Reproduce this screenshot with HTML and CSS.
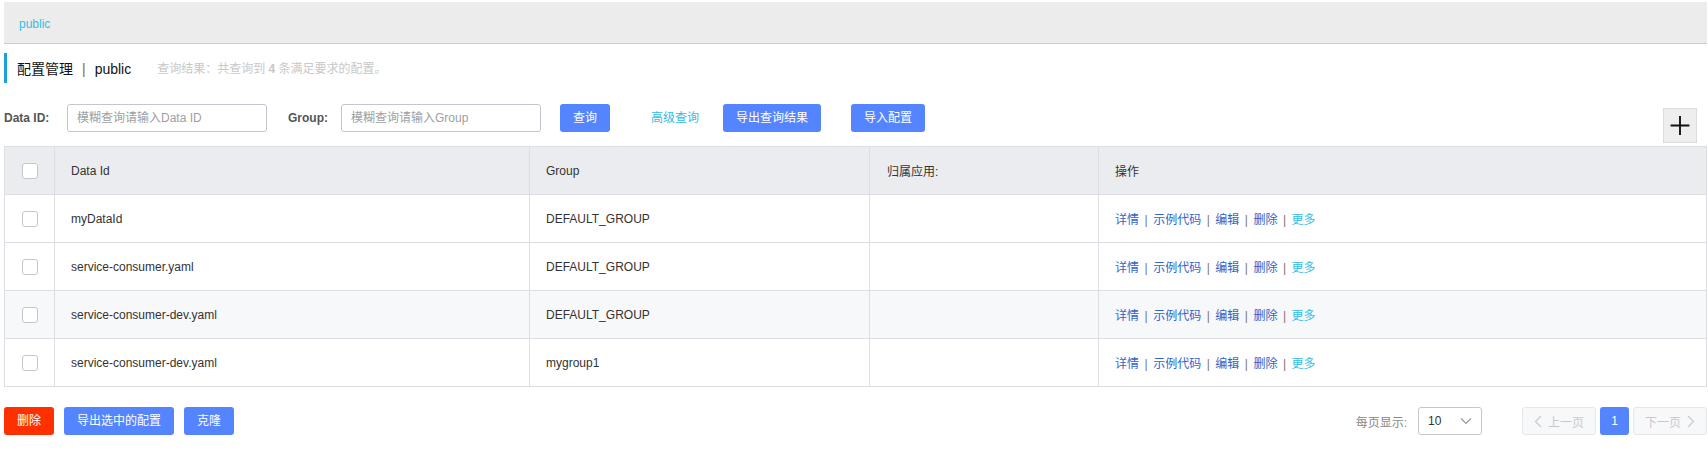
FILE: index.html
```html
<!DOCTYPE html>
<html lang="zh-CN">
<head>
<meta charset="utf-8">
<title>配置管理</title>
<link rel="stylesheet" href="styles.css">
</head>
<body>
<div class="page">
  <div class="ns-bar"><a class="ns-link">public</a></div>

  <div class="title-row">
    <span class="title-main">配置管理</span>
    <span class="title-sep">|</span>
    <span class="title-ns">public</span>
    <span class="title-summary">查询结果：共查询到 <b>4</b> 条满足要求的配置。</span>
  </div>

  <div class="toolbar">
    <label class="field-label label-dataid">Data ID:</label>
    <div class="input"><span class="placeholder">模糊查询请输入Data ID</span></div>
    <label class="field-label label-group">Group:</label>
    <div class="input"><span class="placeholder">模糊查询请输入Group</span></div>
    <button class="btn btn-primary btn-query">查询</button>
    <a class="text-link adv-link">高级查询</a>
    <button class="btn btn-primary btn-export">导出查询结果</button>
    <button class="btn btn-primary btn-import">导入配置</button>
    <button class="plus-btn" aria-label="新建配置">
      <svg width="34" height="35" viewBox="0 0 34 35"><path d="M7 17.5H27M17 7.5V27.5" stroke="#111" stroke-width="2" fill="none"/></svg>
    </button>
  </div>

  <table class="cfg-table">
    <colgroup>
      <col class="c-check"><col class="c-id"><col class="c-group"><col class="c-app"><col>
    </colgroup>
    <thead>
      <tr>
        <th class="check-cell"><span class="checkbox"></span></th>
        <th>Data Id</th>
        <th>Group</th>
        <th class="app-cell">归属应用:</th>
        <th>操作</th>
      </tr>
    </thead>
    <tbody>
      <tr>
        <td class="check-cell"><span class="checkbox"></span></td>
        <td>myDataId</td>
        <td>DEFAULT_GROUP</td>
        <td></td>
        <td class="ops"><a>详情</a><i>|</i><a>示例代码</a><i>|</i><a>编辑</a><i>|</i><a>删除</a><i>|</i><a class="more">更多</a></td>
      </tr>
      <tr>
        <td class="check-cell"><span class="checkbox"></span></td>
        <td>service-consumer.yaml</td>
        <td>DEFAULT_GROUP</td>
        <td></td>
        <td class="ops"><a>详情</a><i>|</i><a>示例代码</a><i>|</i><a>编辑</a><i>|</i><a>删除</a><i>|</i><a class="more">更多</a></td>
      </tr>
      <tr class="hover">
        <td class="check-cell"><span class="checkbox"></span></td>
        <td>service-consumer-dev.yaml</td>
        <td>DEFAULT_GROUP</td>
        <td></td>
        <td class="ops"><a>详情</a><i>|</i><a>示例代码</a><i>|</i><a>编辑</a><i>|</i><a>删除</a><i>|</i><a class="more">更多</a></td>
      </tr>
      <tr>
        <td class="check-cell"><span class="checkbox"></span></td>
        <td>service-consumer-dev.yaml</td>
        <td>mygroup1</td>
        <td></td>
        <td class="ops"><a>详情</a><i>|</i><a>示例代码</a><i>|</i><a>编辑</a><i>|</i><a>删除</a><i>|</i><a class="more">更多</a></td>
      </tr>
    </tbody>
  </table>

  <div class="footer">
    <div class="footer-actions">
      <button class="btn btn-danger">删除</button>
      <button class="btn btn-primary">导出选中的配置</button>
      <button class="btn btn-primary">克隆</button>
    </div>
    <div class="pager">
      <span class="pager-label">每页显示:</span>
      <div class="select">
        <span>10</span>
        <svg width="12" height="8" viewBox="0 0 12 8"><path d="M1 1.5L6 6.5L11 1.5" stroke="#999" stroke-width="1.2" fill="none"/></svg>
      </div>
      <div class="pages">
        <button class="page-btn nav">
          <svg width="8" height="13" viewBox="0 0 8 13"><path d="M7 1L1.5 6.5L7 12" stroke="#ccc" stroke-width="1.3" fill="none"/></svg>
          <span>上一页</span>
        </button>
        <button class="page-btn current">1</button>
        <button class="page-btn nav next">
          <span>下一页</span>
          <svg width="8" height="13" viewBox="0 0 8 13"><path d="M1 1L6.5 6.5L1 12" stroke="#ccc" stroke-width="1.3" fill="none"/></svg>
        </button>
      </div>
    </div>
  </div>
</div>
</body>
</html>
```

FILE: styles.css
```css
* { box-sizing: border-box; }

html, body {
  margin: 0;
  padding: 0;
  background: #fff;
}

body {
  font-family: "Liberation Sans", Arial, "Noto Sans CJK SC", sans-serif;
  font-size: 12px;
  color: #333;
}

.page {
  padding: 2px 1px 0 4px;
}

/* namespace bar */
.ns-bar {
  height: 42px;
  padding: 3px 0 0 15px;
  background: #ececec;
  border-bottom: 1px solid #cccccc;
}

.ns-link {
  display: block;
  line-height: 38px;
  color: #33bde5;
  font-size: 12px;
}

/* title */
.title-row {
  margin-top: 9px;
  height: 30px;
  line-height: 28px;
  padding-top: 2px;
  border-left: 3px solid #1ea0d8;
  padding-left: 10px;
  display: flex;
  align-items: center;
  white-space: nowrap;
}

.title-main,
.title-ns {
  font-size: 14px;
  color: #111;
}

.title-sep {
  font-size: 14px;
  color: #8a6a2a;
  margin: 0 9px;
}

.title-summary {
  margin-left: 26px;
  font-size: 12px;
  color: #c8c8c8;
}

.title-summary b {
  font-weight: bold;
}

/* toolbar */
.toolbar {
  margin-top: 21px;
  display: flex;
  align-items: flex-start;
}

.field-label {
  font-weight: bold;
  color: #555;
  line-height: 28px;
  font-size: 12px;
}

.label-dataid { width: 63px; }

.label-group {
  width: 53px;
  margin-left: 21px;
}

.input {
  width: 200px;
  height: 28px;
  border: 1px solid #c4c6cf;
  border-radius: 3px;
  padding: 0 9px;
  line-height: 26px;
  background: #fff;
}

.placeholder {
  color: #a0a0a0;
  font-size: 12px;
}

.btn {
  height: 28px;
  padding: 0 13px;
  border: none;
  border-radius: 3px;
  font-family: inherit;
  font-size: 12px;
  line-height: 28px;
  color: #fff;
  cursor: pointer;
  white-space: nowrap;
}

.btn-primary { background: #5584ff; }
.btn-danger { background: #ff3000; }

.btn-query { margin-left: 19px; }

.adv-link {
  margin-left: 41px;
  line-height: 28px;
  color: #33bde5;
  font-size: 12px;
}

.btn-export { margin-left: 24px; }
.btn-import { margin-left: 30px; }

.plus-btn {
  margin-left: auto;
  margin-right: 10px;
  margin-top: 4px;
  width: 34px;
  height: 35px;
  padding: 0;
  border: 1px solid #dcdcdc;
  background: #eeeeee;
  display: flex;
  align-items: center;
  justify-content: center;
}

.plus-btn svg { display: block; }

/* table */
.cfg-table {
  margin-top: 3px;
  width: 100%;
  table-layout: fixed;
  border-collapse: collapse;
  border: 1px solid #dcdee3;
}

.c-check { width: 50px; }
.c-id { width: 475px; }
.c-group { width: 340px; }
.c-app { width: 229px; }

.cfg-table th,
.cfg-table td {
  height: 48px;
  padding: 0 16px;
  border: 1px solid #dcdee3;
  text-align: left;
  font-weight: normal;
  font-size: 12px;
  color: #333;
  white-space: nowrap;
  vertical-align: middle;
}

.cfg-table th {
  background: #ebecf0;
}

.cfg-table th.app-cell { padding-left: 17px; }

.cfg-table tr.hover td { background: #f7f8fa; }

.cfg-table .check-cell {
  padding: 0;
  text-align: center;
}

.checkbox {
  display: inline-block;
  width: 16px;
  height: 16px;
  border: 1px solid #c4c6cf;
  border-radius: 3px;
  background: #fff;
  vertical-align: middle;
}

.ops a {
  color: #2d64cc;
}

.ops a.more { color: #33bde5; }

.ops i {
  font-style: normal;
  color: #777;
  margin: 0 5.5px;
}

/* footer */
.footer {
  margin-top: 20px;
  display: flex;
  justify-content: space-between;
  align-items: flex-start;
}

.footer-actions {
  display: flex;
  gap: 10px;
}

.pager {
  display: flex;
  align-items: center;
}

.pager-label {
  color: #888;
  font-size: 12px;
  margin-right: 11px;
}

.select {
  width: 64px;
  height: 28px;
  border: 1px solid #c4c6cf;
  border-radius: 3px;
  padding: 0 9px;
  display: flex;
  align-items: center;
  justify-content: space-between;
  color: #333;
  font-size: 12px;
}

.select svg { display: block; }

.pages {
  margin-left: 40px;
  display: flex;
  gap: 4px;
}

.page-btn {
  height: 28px;
  border-radius: 3px;
  font-family: inherit;
  font-size: 12px;
  padding: 0;
  display: flex;
  align-items: center;
  justify-content: center;
}

.page-btn.nav {
  width: 74px;
  background: #f7f8fa;
  border: 1px solid #e6e7eb;
  color: #c8c8c8;
  gap: 6px;
}

.page-btn.current {
  width: 29px;
  background: #5584ff;
  border: none;
  color: #fff;
}
```
